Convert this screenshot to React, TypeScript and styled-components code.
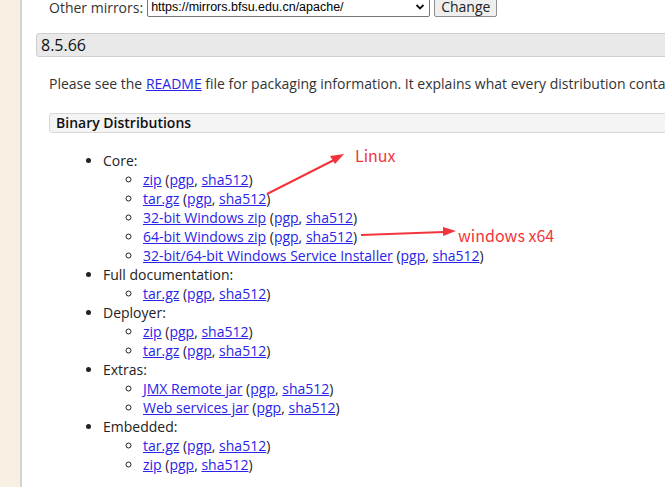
import React from "react";
import styled, { createGlobalStyle } from "styled-components";

const GlobalStyle = createGlobalStyle`
  html, body { margin: 0; padding: 0; background: #fff; }
  body { font-family: "Open Sans", "Noto Sans", sans-serif; font-size: 14px; color: #222; overflow: hidden; }
`;

const Page = styled.div`
  position: relative;
  display: flex;
  width: 665px;
  height: 487px;
  overflow: hidden;
`;

const Sidebar = styled.div`
  flex: 0 0 20px;
  background: #f8f0e3;
  border-right: 2px solid #d4d4d4;
`;

const Main = styled.div`
  flex: 1;
  padding-left: 14px;
  min-width: 0;
`;

const MirrorRow = styled.div`
  display: flex;
  align-items: center;
  gap: 4px;
  margin-top: -3px;
  padding-left: 13px;
  height: 20px;
  white-space: nowrap;
  color: #333;
`;

const Select = styled.div`
  display: flex;
  align-items: center;
  justify-content: space-between;
  box-sizing: border-box;
  width: 283px;
  height: 19px;
  border: 1px solid #767676;
  border-radius: 2px;
  padding: 0 4px 0 3px;
  font-family: "Liberation Sans", Arial, sans-serif;
  font-size: 12.5px;
  color: #000;
`;

const Button = styled.div`
  box-sizing: border-box;
  height: 20px;
  padding: 0 6px;
  border: 1px solid #8f8f8f;
  border-radius: 2px;
  background: #efefef;
  font-size: 14px;
  line-height: 18px;
  color: #222;
`;

const VersionHeader = styled.h3`
  box-sizing: border-box;
  margin: 16px -10px 0 0;
  height: 24px;
  padding-left: 4px;
  background: #e9e9e9;
  border: 1px solid #cfcfcf;
  border-radius: 3px;
  font-size: 16px;
  font-weight: normal;
  line-height: 22px;
  color: #111;
  white-space: nowrap;
`;

const Paragraph = styled.p`
  margin: 17px 0 0 13px;
  white-space: nowrap;
  line-height: 20px;
  color: #333;
`;

const SubHeader = styled.h4`
  box-sizing: border-box;
  margin: 19px -10px 0 13px;
  height: 20px;
  padding-left: 6px;
  background: #f4f4f4;
  border: 1px solid #d8d8d8;
  border-radius: 3px;
  font-size: 14px;
  font-weight: 600;
  line-height: 18px;
  color: #111;
`;

const List = styled.ul`
  margin: 18px 0 0 0;
  padding-left: 67px;
  list-style: disc;
  line-height: 19px;
  color: #222;
`;

const SubList = styled.ul`
  margin: 0;
  padding-left: 40px;
  list-style: circle;
`;

const Link = styled.a`
  color: #2a24e8;
  text-decoration: underline;
`;

const Overlay = styled.svg`
  position: absolute;
  left: 0;
  top: 0;
  pointer-events: none;
`;

const Note = styled.span<{ $x: number; $y: number }>`
  position: absolute;
  left: ${(p) => p.$x}px;
  top: ${(p) => p.$y}px;
  font-family: "Noto Sans CJK SC", "Noto Sans", sans-serif;
  font-size: 16px;
  line-height: 20px;
  color: #f2353c;
  white-space: nowrap;
`;

type Item = { name: string };
const groups: { title: string; items: string[] }[] = [
  { title: "Core:", items: ["zip", "tar.gz", "32-bit Windows zip", "64-bit Windows zip", "32-bit/64-bit Windows Service Installer"] },
  { title: "Full documentation:", items: ["tar.gz"] },
  { title: "Deployer:", items: ["zip", "tar.gz"] },
  { title: "Extras:", items: ["JMX Remote jar", "Web services jar"] },
  { title: "Embedded:", items: ["tar.gz", "zip"] },
];

const Dist = ({ name }: Item) => (
  <li>
    <Link href="#">{name}</Link> (<Link href="#">pgp</Link>, <Link href="#">sha512</Link>)
  </li>
);

export default function App() {
  return (
    <>
      <GlobalStyle />
      <Page>
        <Sidebar />
        <Main>
          <MirrorRow>
            Other mirrors:
            <Select>
              <span>https://mirrors.bfsu.edu.cn/apache/</span>
              <svg width="10" height="8" viewBox="0 0 10 8">
                <path d="M1.5 2 L5 5.5 L8.5 2" fill="none" stroke="#111" strokeWidth="1.8" />
              </svg>
            </Select>
            <Button>Change</Button>
          </MirrorRow>
          <VersionHeader>8.5.66</VersionHeader>
          <Paragraph>
            Please see the <Link href="#">README</Link> file for packaging information. It explains what every distribution contains.
          </Paragraph>
          <SubHeader>Binary Distributions</SubHeader>
          <List>
            {groups.map((g) => (
              <li key={g.title}>
                {g.title}
                <SubList>
                  {g.items.map((it, i) => (
                    <Dist key={i} name={it} />
                  ))}
                </SubList>
              </li>
            ))}
          </List>
        </Main>
        <Overlay width="665" height="487" viewBox="0 0 665 487">
          <line x1="267" y1="194" x2="334" y2="160" stroke="#f2353c" strokeWidth="2" />
          <polygon points="344,154 330,156 335,164" fill="#f2353c" />
          <line x1="361" y1="235" x2="444" y2="232" stroke="#f2353c" strokeWidth="2" />
          <polygon points="456,231 443,227 443,236" fill="#f2353c" />
        </Overlay>
        <Note $x={355} $y={145}>Linux</Note>
        <Note $x={458} $y={225}>windows x64</Note>
      </Page>
    </>
  );
}
